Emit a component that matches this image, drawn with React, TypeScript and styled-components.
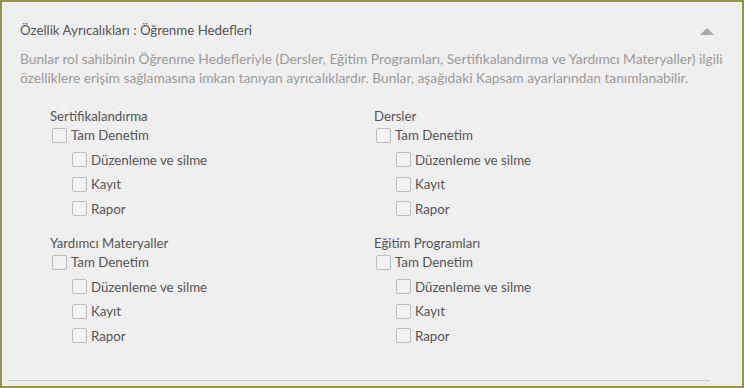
import React from "react";
import styled, { createGlobalStyle } from "styled-components";

const Global = createGlobalStyle`
  html, body { margin: 0; padding: 0; background: #efefef; }
  body { font-family: Lato, "Open Sans", sans-serif; }
  * { box-sizing: border-box; }
`;

const Panel = styled.div`
  width: 744px;
  height: 388px;
  border: 2px solid #95953f;
  background: #efefef;
  padding: 18px 0 0 18px;
  display: flex;
  flex-direction: column;
  position: relative;
`;

const Header = styled.div`
  display: flex;
  align-items: center;
  justify-content: space-between;
  height: 20px;
  padding-right: 28px;
`;

const Title = styled.h2`
  margin: 0;
  font-size: 13.3px;
  font-weight: 400;
  line-height: 20px;
  color: #555;
`;

const Caret = styled.span`
  width: 0;
  height: 0;
  border-left: 7px solid transparent;
  border-right: 7px solid transparent;
  border-bottom: 7px solid #a9a9a9;
  margin-top: 2px;
`;

const Description = styled.p`
  margin: 9px 0 0;
  font-size: 13.75px;
  line-height: 19px;
  color: #9a9a9a;
`;

const Line = styled.span`
  display: block;
  white-space: nowrap;
`;

const Grid = styled.div`
  display: grid;
  grid-template-columns: 324px 324px;
  row-gap: 15px;
  margin-top: 22px;
  padding-left: 30px;
`;

const Group = styled.div`
  display: flex;
  flex-direction: column;
`;

const GroupTitle = styled.div`
  font-size: 13.2px;
  line-height: 14px;
  color: #555;
`;

const Row = styled.label<{ $indent?: boolean }>`
  display: flex;
  align-items: center;
  height: 24.5px;
  padding-left: ${(p) => (p.$indent ? "22px" : "2px")};
  font-size: 13.3px;
  color: #555;
  gap: 4px;
`;

const Box = styled.span`
  width: 15px;
  height: 15px;
  border: 1px solid #bdbdbd;
  border-radius: 2px;
  background: #f2f2f2;
  flex: none;
`;

const Rule = styled.div`
  position: absolute;
  left: 6px;
  width: 702px;
  bottom: 5px;
  height: 1px;
  background: #c6c6c6;
`;

const groups = ["Sertifikalandırma", "Dersler", "Yardımcı Materyaller", "Eğitim Programları"];
const subs = ["Düzenleme ve silme", "Kayıt", "Rapor"];

export default function App() {
  return (
    <>
      <Global />
      <Panel>
        <Header>
          <Title>Özellik Ayrıcalıkları : Öğrenme Hedefleri</Title>
          <Caret />
        </Header>
        <Description>
          <Line>
            Bunlar rol sahibinin Öğrenme Hedefleriyle (Dersler, Eğitim Programları, Sertifikalandırma ve Yardımcı Materyaller) ilgili
          </Line>
          <Line>
            özelliklere erişim sağlamasına imkan tanıyan ayrıcalıklardır. Bunlar, aşağıdaki Kapsam ayarlarından tanımlanabilir.
          </Line>
        </Description>
        <Grid>
          {groups.map((g) => (
            <Group key={g}>
              <GroupTitle>{g}</GroupTitle>
              <Row>
                <Box />
                Tam Denetim
              </Row>
              {subs.map((s) => (
                <Row key={s} $indent>
                  <Box />
                  {s}
                </Row>
              ))}
            </Group>
          ))}
        </Grid>
        <Rule />
      </Panel>
    </>
  );
}
